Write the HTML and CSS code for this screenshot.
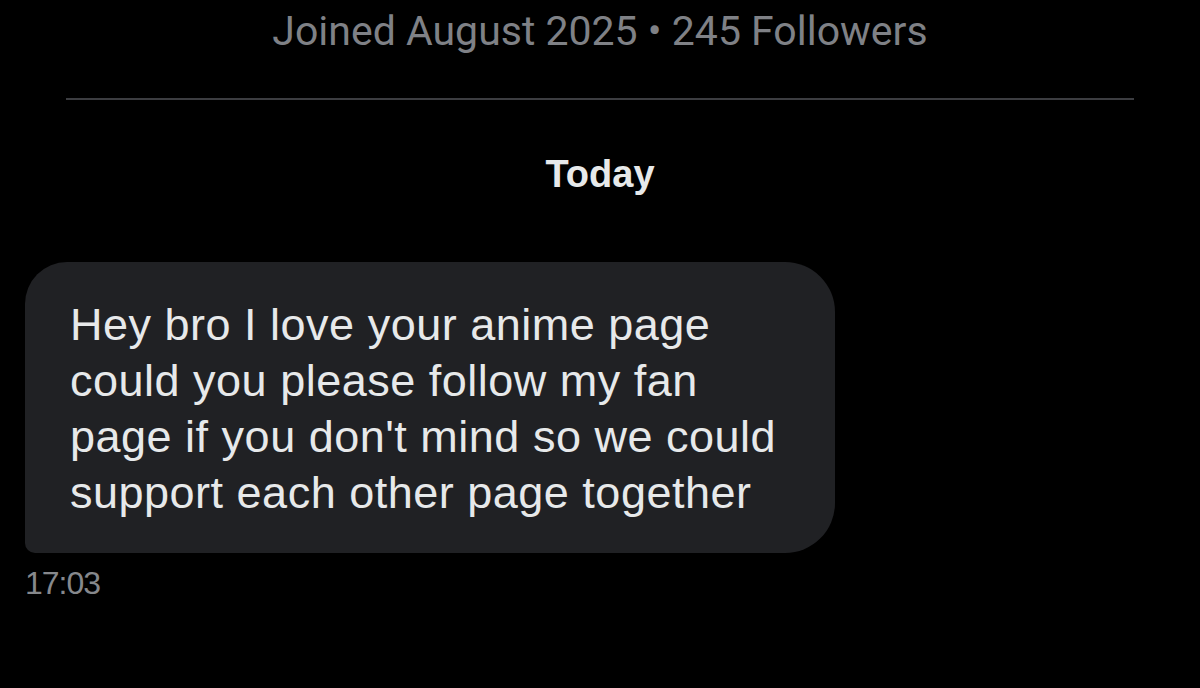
FILE: index.html
```html
<!DOCTYPE html>
<html lang="en">
<head>
<meta charset="utf-8">
<link rel="stylesheet" href="styles.css">
</head>
<body>
<div class="page">
  <header class="profile-meta">
    <p class="joined">Joined August 2025 • 245 Followers</p>
    <div class="divider"></div>
  </header>
  <div class="day">Today</div>
  <div class="message">
    <div class="bubble">Hey bro I love your anime page<br>could you please follow my fan<br>page if you don't mind so we could<br>support each other page together</div>
    <div class="time">17:03</div>
  </div>
</div>
</body>
</html>
```
FILE: styles.css
```css
html, body {
  margin: 0;
  padding: 0;
  background: #000;
}
body {
  width: 1200px;
  height: 688px;
  overflow: hidden;
  font-family: "Liberation Sans", Arial, sans-serif;
}
.page {
  display: flex;
  flex-direction: column;
}
.profile-meta {
  display: flex;
  flex-direction: column;
  align-items: center;
}
.joined {
  margin: 7px 0 0;
  font-family: Roboto, "Liberation Sans", sans-serif;
  font-size: 41px;
  line-height: 48px;
  color: #7f8186;
  letter-spacing: 0;
}
.divider {
  margin-top: 43px;
  width: 1068px;
  height: 2px;
  background: #3c3d41;
}
.day {
  margin-top: 52px;
  text-align: center;
  font-size: 38px;
  font-weight: bold;
  line-height: 44px;
  color: #e7e9ea;
}
.message {
  margin: 66px 0 0 25px;
  display: flex;
  flex-direction: column;
  align-items: flex-start;
}
.bubble {
  width: 810px;
  box-sizing: border-box;
  padding: 35px 0 32px 45px;
  background: #202124;
  border-radius: 42px 50px 50px 10px;
  color: #e7e9ea;
  font-size: 45px;
  line-height: 56px;
  letter-spacing: 0.5px;
}
.time {
  margin-top: 12px;
  font-size: 32px;
  line-height: 36px;
  color: #86888c;
  letter-spacing: -1px;
}
```
